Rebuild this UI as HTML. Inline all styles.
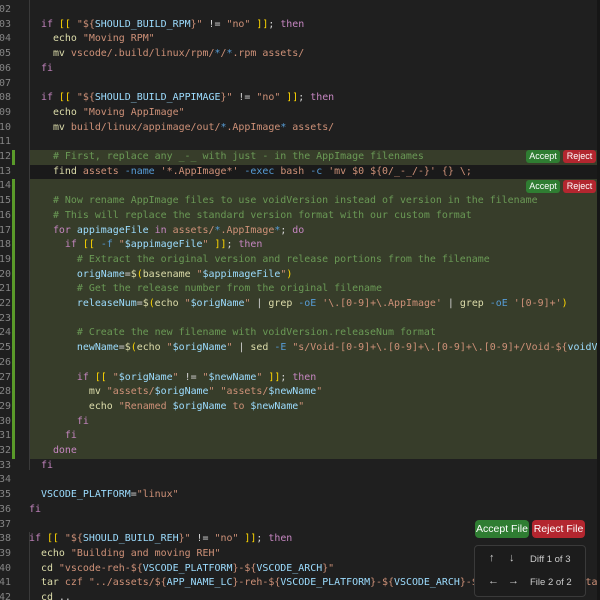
<!DOCTYPE html>
<html><head><meta charset="utf-8"><style>
html,body{margin:0;padding:0;width:600px;height:600px;overflow:hidden;background:#1f1f1f;}
#ed{position:relative;width:600px;height:600px;font-family:"DejaVu Sans Mono","Liberation Mono",monospace;font-size:9.95px;color:#d4d4d4;}
.ln{position:absolute;left:0;width:11px;overflow:hidden;height:14.7px;line-height:14.7px;color:#858585;text-align:right;direction:rtl;}
.row{position:absolute;left:29px;right:3px;height:14.7px;line-height:14.7px;white-space:pre;overflow:hidden;}
.gr{position:absolute;left:29px;right:3px;background:#373d2a;}
.bar{position:absolute;left:12px;width:3px;background:#5a9a2a;}
.k{color:#c586c0}.s{color:#ce9178}.v{color:#9cdcfe}.c{color:#6a9955}.f{color:#dcdcaa}.o{color:#569cd6}.b{color:#ffd700}.q{color:#da70d6}
.btn{position:absolute;font-family:"Liberation Sans",sans-serif;font-size:9px;color:#fff;border-radius:3px;text-align:center;line-height:13px;height:13px;}
.acc{background:#2f7d32}.rej{background:#b3262f}
.btn2{position:absolute;font-family:"Liberation Sans",sans-serif;font-size:10.5px;color:#fff;border-radius:4px;text-align:center;line-height:18px;height:18px;}
#panel{position:absolute;left:474px;top:545px;width:110px;height:50px;background:#1c1c1c;border:1px solid #3a3a3a;border-radius:4px;font-family:"Liberation Sans",sans-serif;font-size:9.5px;color:#ccc;}
#sb{position:absolute;right:0;top:0;width:3px;height:600px;background:#161616;}
.g{position:absolute;width:1px;background:#3a3a3a;}
</style></head><body><div id="ed">
<div class="gr" style="top:150px;height:14.7px"></div>
<div style="position:absolute;left:29px;right:3px;top:164.7px;height:14.7px;background:#1a1a1a"></div>
<div class="gr" style="top:179.4px;height:280px"></div>
<div class="bar" style="top:150px;height:14.7px"></div>
<div class="bar" style="top:179.4px;height:280px"></div>
<div class="g" style="left:29px;top:0;height:470px"></div>
<div class="g" style="left:29px;top:532px;height:68px"></div>
<div id="sb"></div>

<div class="ln" style="top:3px">402</div><div class="ln" style="top:17.7px">403</div><div class="ln" style="top:32.4px">404</div><div class="ln" style="top:47.1px">405</div><div class="ln" style="top:61.8px">406</div><div class="ln" style="top:76.5px">407</div><div class="ln" style="top:91.2px">408</div><div class="ln" style="top:105.9px">409</div><div class="ln" style="top:120.6px">410</div><div class="ln" style="top:135.3px">411</div><div class="ln" style="top:150px">412</div><div class="ln" style="top:164.7px">413</div><div class="ln" style="top:179.4px">414</div><div class="ln" style="top:194.1px">415</div><div class="ln" style="top:208.8px">416</div><div class="ln" style="top:223.5px">417</div><div class="ln" style="top:238.2px">418</div><div class="ln" style="top:252.9px">419</div><div class="ln" style="top:267.6px">420</div><div class="ln" style="top:282.3px">421</div><div class="ln" style="top:297px">422</div><div class="ln" style="top:311.7px">423</div><div class="ln" style="top:326.4px">424</div><div class="ln" style="top:341.1px">425</div><div class="ln" style="top:355.8px">426</div><div class="ln" style="top:370.5px">427</div><div class="ln" style="top:385.2px">428</div><div class="ln" style="top:399.9px">429</div><div class="ln" style="top:414.6px">430</div><div class="ln" style="top:429.3px">431</div><div class="ln" style="top:444px">432</div><div class="ln" style="top:458.7px">433</div><div class="ln" style="top:473.4px">434</div><div class="ln" style="top:488.1px">435</div><div class="ln" style="top:502.8px">436</div><div class="ln" style="top:517.5px">437</div><div class="ln" style="top:532.2px">438</div><div class="ln" style="top:546.9px">439</div><div class="ln" style="top:561.6px">440</div><div class="ln" style="top:576.3px">441</div><div class="ln" style="top:591px">442</div>

<div class="row" style="top:17.7px">  <span class="k">if</span> <span class="b">[[</span> <span class="s">"${</span><span class="v">SHOULD_BUILD_RPM</span><span class="s">}"</span> != <span class="s">"no"</span> <span class="b">]]</span>; <span class="k">then</span></div>
<div class="row" style="top:32.4px">    <span class="f">echo</span> <span class="s">"Moving RPM"</span></div>
<div class="row" style="top:47.1px">    <span class="f">mv</span> <span class="s">vscode/.build/linux/rpm/</span><span class="o">*</span><span class="s">/</span><span class="o">*</span><span class="s">.rpm assets/</span></div>
<div class="row" style="top:61.8px">  <span class="k">fi</span></div>
<div class="row" style="top:91.2px">  <span class="k">if</span> <span class="b">[[</span> <span class="s">"${</span><span class="v">SHOULD_BUILD_APPIMAGE</span><span class="s">}"</span> != <span class="s">"no"</span> <span class="b">]]</span>; <span class="k">then</span></div>
<div class="row" style="top:105.9px">    <span class="f">echo</span> <span class="s">"Moving AppImage"</span></div>
<div class="row" style="top:120.6px">    <span class="f">mv</span> <span class="s">build/linux/appimage/out/</span><span class="o">*</span><span class="s">.AppImage</span><span class="o">*</span><span class="s"> assets/</span></div>
<div class="row" style="top:150px">    <span class="c"># First, replace any _-_ with just - in the AppImage filenames</span></div>
<div class="row" style="top:164.7px">    <span class="f">find</span> <span class="s">assets</span> <span class="o">-name</span> <span class="s">'*.AppImage*'</span> <span class="o">-exec</span> <span class="s">bash</span> <span class="o">-c</span> <span class="s">'mv $0 ${0/_-_/-}'</span> <span class="s">{}</span> <span class="s">\;</span></div>
<div class="row" style="top:194.1px">    <span class="c"># Now rename AppImage files to use voidVersion instead of version in the filename</span></div>
<div class="row" style="top:208.8px">    <span class="c"># This will replace the standard version format with our custom format</span></div>
<div class="row" style="top:223.5px">    <span class="k">for</span> <span class="v">appimageFile</span> <span class="k">in</span> <span class="s">assets/</span><span class="o">*</span><span class="s">.AppImage</span><span class="o">*</span>; <span class="k">do</span></div>
<div class="row" style="top:238.2px">      <span class="k">if</span> <span class="b">[[</span> <span class="o">-f</span> <span class="s">"</span><span class="v">$appimageFile</span><span class="s">"</span> <span class="b">]]</span>; <span class="k">then</span></div>
<div class="row" style="top:252.9px">        <span class="c"># Extract the original version and release portions from the filename</span></div>
<div class="row" style="top:267.6px">        <span class="v">origName</span>=<span class="f">$</span><span class="b">(</span><span class="f">basename</span> <span class="s">"</span><span class="v">$appimageFile</span><span class="s">"</span><span class="b">)</span></div>
<div class="row" style="top:282.3px">        <span class="c"># Get the release number from the original filename</span></div>
<div class="row" style="top:297px">        <span class="v">releaseNum</span>=<span class="f">$</span><span class="b">(</span><span class="f">echo</span> <span class="s">"</span><span class="v">$origName</span><span class="s">"</span> | <span class="f">grep</span> <span class="o">-oE</span> <span class="s">'\.[0-9]+\.AppImage'</span> | <span class="f">grep</span> <span class="o">-oE</span> <span class="s">'[0-9]+'</span><span class="b">)</span></div>
<div class="row" style="top:326.4px">        <span class="c"># Create the new filename with voidVersion.releaseNum format</span></div>
<div class="row" style="top:341.1px">        <span class="v">newName</span>=<span class="f">$</span><span class="b">(</span><span class="f">echo</span> <span class="s">"</span><span class="v">$origName</span><span class="s">"</span> | <span class="f">sed</span> <span class="o">-E</span> <span class="s">"s/Void-[0-9]+\.[0-9]+\.[0-9]+\.[0-9]+/Void-${</span><span class="v">voidVersion</span></div>
<div class="row" style="top:370.5px">        <span class="k">if</span> <span class="b">[[</span> <span class="s">"</span><span class="v">$origName</span><span class="s">"</span> != <span class="s">"</span><span class="v">$newName</span><span class="s">"</span> <span class="b">]]</span>; <span class="k">then</span></div>
<div class="row" style="top:385.2px">          <span class="f">mv</span> <span class="s">"assets/</span><span class="v">$origName</span><span class="s">"</span> <span class="s">"assets/</span><span class="v">$newName</span><span class="s">"</span></div>
<div class="row" style="top:399.9px">          <span class="f">echo</span> <span class="s">"Renamed </span><span class="v">$origName</span><span class="s"> to </span><span class="v">$newName</span><span class="s">"</span></div>
<div class="row" style="top:414.6px">        <span class="k">fi</span></div>
<div class="row" style="top:429.3px">      <span class="k">fi</span></div>
<div class="row" style="top:444px">    <span class="k">done</span></div>
<div class="row" style="top:458.7px">  <span class="k">fi</span></div>
<div class="row" style="top:488.1px">  <span class="v">VSCODE_PLATFORM</span>=<span class="s">"linux"</span></div>
<div class="row" style="top:502.8px"><span class="k">fi</span></div>
<div class="row" style="top:532.2px"><span class="k">if</span> <span class="b">[[</span> <span class="s">"${</span><span class="v">SHOULD_BUILD_REH</span><span class="s">}"</span> != <span class="s">"no"</span> <span class="b">]]</span>; <span class="k">then</span></div>
<div class="row" style="top:546.9px">  <span class="f">echo</span> <span class="s">"Building and moving REH"</span></div>
<div class="row" style="top:561.6px">  <span class="f">cd</span> <span class="s">"vscode-reh-${</span><span class="v">VSCODE_PLATFORM</span><span class="s">}-${</span><span class="v">VSCODE_ARCH</span><span class="s">}"</span></div>
<div class="row" style="top:576.3px">  <span class="f">tar</span> <span class="s">czf</span> <span class="s">"../assets/${</span><span class="v">APP_NAME_LC</span><span class="s">}-reh-${</span><span class="v">VSCODE_PLATFORM</span><span class="s">}-${</span><span class="v">VSCODE_ARCH</span><span class="s">}-${</span><span class="v">RELEASE_VERSION</span><span class="s">}.tar.gz"</span></div>
<div class="row" style="top:591px">  <span class="f">cd</span> ..</div>

<div class="btn acc" style="left:526px;top:150px;width:34px">Accept</div>
<div class="btn rej" style="left:563px;top:150px;width:33px">Reject</div>
<div class="btn acc" style="left:526px;top:179.5px;width:34px">Accept</div>
<div class="btn rej" style="left:563px;top:179.5px;width:33px">Reject</div>
<div class="btn2 acc" style="left:475px;top:520px;width:54px">Accept File</div>
<div class="btn2 rej" style="left:532px;top:520px;width:53px">Reject File</div>
<div id="panel">
<div style="position:absolute;left:14px;top:6px;font-size:11px">&#8593;</div>
<div style="position:absolute;left:34px;top:6px;font-size:11px">&#8595;</div>
<div style="position:absolute;left:55px;top:8px">Diff 1 of 3</div>
<div style="position:absolute;left:13px;top:29px;font-size:11px">&#8592;</div>
<div style="position:absolute;left:33px;top:29px;font-size:11px">&#8594;</div>
<div style="position:absolute;left:55px;top:31px">File 2 of 2</div>
</div>
</div></body></html>
